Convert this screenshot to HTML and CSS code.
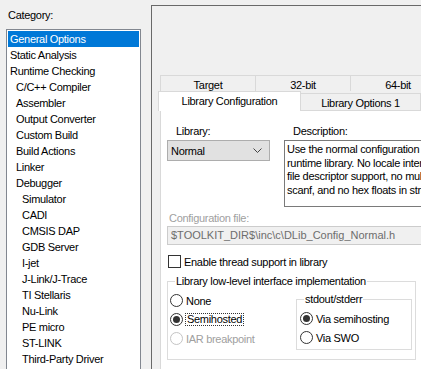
FILE: index.html
```html
<!DOCTYPE html>
<html lang="en">
<head>
    <meta charset="UTF-8">
    <title>Options - General Options</title>
    <link rel="stylesheet" href="styles.css">
</head>
<body>
    <div class="dialog">
        <div class="category">
            <div class="cat-label">Category:</div>
            <ul class="listbox">
                <li class="sel">General Options</li>
                <li>Static Analysis</li>
                <li>Runtime Checking</li>
                <li class="l1">C/C++ Compiler</li>
                <li class="l1">Assembler</li>
                <li class="l1">Output Converter</li>
                <li class="l1">Custom Build</li>
                <li class="l1">Build Actions</li>
                <li class="l1">Linker</li>
                <li class="l1">Debugger</li>
                <li class="l2">Simulator</li>
                <li class="l2">CADI</li>
                <li class="l2">CMSIS DAP</li>
                <li class="l2">GDB Server</li>
                <li class="l2">I-jet</li>
                <li class="l2">J-Link/J-Trace</li>
                <li class="l2">TI Stellaris</li>
                <li class="l2">Nu-Link</li>
                <li class="l2">PE micro</li>
                <li class="l2">ST-LINK</li>
                <li class="l2">Third-Party Driver</li>
            </ul>
        </div>

        <div class="page">
            <div class="tabs">
                <div class="tab-row back">
                    <div class="tab">Target</div>
                    <div class="tab">32-bit</div>
                    <div class="tab">64-bit</div>
                </div>
                <div class="tab-row front">
                    <div class="tab active">Library Configuration</div>
                    <div class="tab">Library Options 1</div>
                </div>

                <div class="pane">
                    <div class="lib-row">
                        <div class="lib-col">
                            <div class="field-label">Library:</div>
                            <div class="select">
                                <span>Normal</span>
                                <svg width="9" height="5" viewBox="0 0 9 5"><polyline points="0.5,0.5 4.5,4.5 8.5,0.5" fill="none" stroke="#444" stroke-width="1"/></svg>
                            </div>
                        </div>
                        <div class="desc-col">
                            <div class="field-label">Description:</div>
                            <div class="desc">
                                Use the normal configuration of the C/C++<br>
                                runtime library. No locale interface, C locale, no<br>
                                file descriptor support, no multibytes in printf and<br>
                                scanf, and no hex floats in strtod.
                            </div>
                        </div>
                    </div>

                    <div class="config-label">Configuration file:</div>
                    <div class="config-field">$TOOLKIT_DIR$\inc\c\DLib_Config_Normal.h</div>

                    <div class="check-row">
                        <span class="checkbox"></span>
                        <span>Enable thread support in library</span>
                    </div>

                    <fieldset class="group">
                        <legend>Library low-level interface implementation</legend>
                        <div class="group-body">
                            <div class="radio-col">
                                <div class="radio-row"><span class="radio"></span><span>None</span></div>
                                <div class="radio-row"><span class="radio on"></span><span class="focus">Semihosted</span></div>
                                <div class="radio-row disabled"><span class="radio"></span><span>IAR breakpoint</span></div>
                            </div>
                            <fieldset class="group inner">
                                <legend>stdout/stderr</legend>
                                <div class="radio-row"><span class="radio on"></span><span>Via semihosting</span></div>
                                <div class="radio-row"><span class="radio"></span><span>Via SWO</span></div>
                            </fieldset>
                        </div>
                    </fieldset>
                </div>
            </div>
        </div>
    </div>
</body>
</html>
```

FILE: styles.css
```css
body {
    margin: 0;
    height: 369px;
    overflow: hidden;
    background: #f0f0f0;
    font-family: "Liberation Sans", Arial, sans-serif;
    font-size: 11px;
    letter-spacing: -0.3px;
    color: #000;
}

.dialog {
    display: flex;
    align-items: flex-start;
}

/* left category list */
.category {
    flex: none;
    width: 135px;
    padding-left: 6px;
}

.cat-label {
    padding: 8px 0 0 2px;
    line-height: 14px;
}

.listbox {
    margin: 7px 0 0;
    padding: 1px;
    list-style: none;
    background: #fff;
    border: 1px solid #828790;
    height: 400px;
}

.listbox li {
    height: 16px;
    line-height: 16px;
    padding-left: 2px;
    white-space: nowrap;
}

.listbox li.sel {
    background: #0078d7;
    color: #fff;
}

.listbox li.l1 { padding-left: 8px; }
.listbox li.l2 { padding-left: 14px; }

/* right page */
.page {
    flex: none;
    width: 400px;
    height: 420px;
    margin: 5px 0 0 10px;
    padding: 69px 0 0 6px;
    border: 1px solid #696969;
}

.tabs {
    width: 380px;
}

.tab-row {
    display: flex;
}

.tab {
    box-sizing: border-box;
    text-align: center;
    white-space: nowrap;
    line-height: 14px;
    border: 1px solid #d9d9d9;
    border-bottom: none;
}

.back {
    margin-left: 2px;
}

.back .tab {
    width: 96px;
    height: 16px;
    padding-top: 2px;
    margin-right: -1px;
}

.front {
    align-items: flex-end;
}

.front .tab {
    width: 120px;
    height: 17px;
    padding-top: 2px;
    border-left: none;
}

.front .tab.active {
    position: relative;
    z-index: 1;
    width: 143px;
    height: 20px;
    margin-bottom: -1px;
    border-left: 1px solid #d9d9d9;
    background: #fff;
}

.pane {
    margin-left: 2px;
    height: 300px;
    padding: 14px 0 0 6px;
    background: #fff;
    border: 1px solid #d9d9d9;
}

.lib-row {
    display: flex;
    gap: 14px;
}

.lib-col {
    width: 103px;
}

.field-label {
    line-height: 13px;
    padding-left: 9px;
    margin-bottom: 2px;
}

.select {
    box-sizing: border-box;
    height: 21px;
    display: flex;
    align-items: center;
    justify-content: space-between;
    padding: 0 7px 0 3px;
    background: #e1e1e1;
    border: 1px solid #adadad;
}

.desc {
    box-sizing: border-box;
    width: 200px;
    height: 67px;
    padding: 2px 0 0 2px;
    line-height: 13.5px;
    white-space: nowrap;
    overflow: hidden;
    border: 1px solid #7a7a7a;
}

.config-label {
    margin-top: 5px;
    padding-left: 2px;
    line-height: 13px;
    color: #a0a0a0;
}

.config-field {
    box-sizing: border-box;
    width: 260px;
    height: 19px;
    margin-top: 1px;
    padding-left: 3px;
    line-height: 17px;
    letter-spacing: 0;
    white-space: nowrap;
    color: #6d6d6d;
    background: #f0f0f0;
    border: 1px solid #cccccc;
}

.check-row {
    display: flex;
    align-items: center;
    gap: 3px;
    margin: 10px 0 0 1px;
    height: 13px;
}

.checkbox {
    box-sizing: border-box;
    width: 13px;
    height: 13px;
    background: #fff;
    border: 1px solid #333;
}

/* group boxes */
.group {
    box-sizing: border-box;
    width: 249px;
    margin: 7px 0 0;
    padding: 0 0 9px 2px;
    border: 1px solid #dcdcdc;
}

.group legend {
    margin-left: 5px;
    padding: 0 1px;
    line-height: 13px;
}

.group-body {
    display: flex;
    align-items: flex-start;
}

.radio-col {
    width: 126px;
    padding-top: 3px;
}

.group.inner {
    width: 116px;
    margin: 5px 0 0;
    padding: 3px 0 2px 3px;
}

.group.inner legend {
    margin-left: 4px;
}

.radio-row {
    display: flex;
    align-items: center;
    gap: 3px;
    height: 19px;
    white-space: nowrap;
}

.radio {
    box-sizing: border-box;
    width: 13px;
    height: 13px;
    border-radius: 50%;
    background: #fff;
    border: 1px solid #333;
    display: flex;
    align-items: center;
    justify-content: center;
}

.radio.on::after {
    content: "";
    width: 7px;
    height: 7px;
    border-radius: 50%;
    background: #333;
}

.radio-row.disabled {
    color: #a0a0a0;
}

.radio-row.disabled .radio {
    border-color: #c4c4c4;
}

.focus {
    line-height: 11px;
    padding: 0 1px;
    outline: 1px dotted #333;
}
```
